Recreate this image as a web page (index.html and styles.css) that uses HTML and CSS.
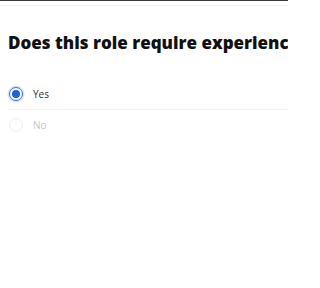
FILE: index.html
```html
<!DOCTYPE html>
<html lang="en">
<head>
<meta charset="utf-8">
<link rel="stylesheet" href="styles.css">
</head>
<body>
<div class="topbar"></div>
<div class="rule"></div>
<main class="page">
  <h1 class="title">Does this role require experience?</h1>
  <div class="options">
    <label class="option">
      <span class="radio checked"><span class="dot"></span></span>
      <span class="label">Yes</span>
    </label>
    <label class="option disabled">
      <span class="radio"></span>
      <span class="label">No</span>
    </label>
  </div>
</main>
</body>
</html>
```
FILE: styles.css
```css
html, body {
  margin: 0;
  padding: 0;
  background: #ffffff;
}
body {
  width: 288px;
  height: 288px;
  overflow: hidden;
  font-family: "Open Sans", "Noto Sans", sans-serif;
}
.topbar {
  height: 1px;
  background: #3a3a3a;
}
.rule {
  height: 1px;
  margin-top: 4px;
  background: #f0f0f0;
}
.page {
  padding: 0 0 0 8px;
}
.title {
  margin: 25px 0 0 0;
  font-size: 17px;
  line-height: 24px;
  font-weight: 800;
  color: #111111;
  white-space: nowrap;
  letter-spacing: 0;
}
.options {
  margin-top: 24px;
  display: flex;
  flex-direction: column;
}
.option {
  display: flex;
  align-items: center;
  gap: 10px;
  height: 30px;
  padding-left: 1px;
}
.option + .option {
  border-top: 1px solid #f2f2f2;
}
.radio {
  box-sizing: border-box;
  width: 14px;
  height: 14px;
  border-radius: 50%;
  border: 1.5px solid #2f6ae8;
  display: flex;
  align-items: center;
  justify-content: center;
  box-shadow: 0 0 0 1.5px #d6e3fb;
}
.dot {
  width: 8px;
  height: 8px;
  border-radius: 50%;
  background: #1f5fe6;
}
.label {
  font-size: 10px;
  color: #333333;
}
.disabled .radio {
  border: 1px solid #eeeeee;
  box-shadow: none;
}
.disabled .label {
  color: #c4c4c4;
}
```
